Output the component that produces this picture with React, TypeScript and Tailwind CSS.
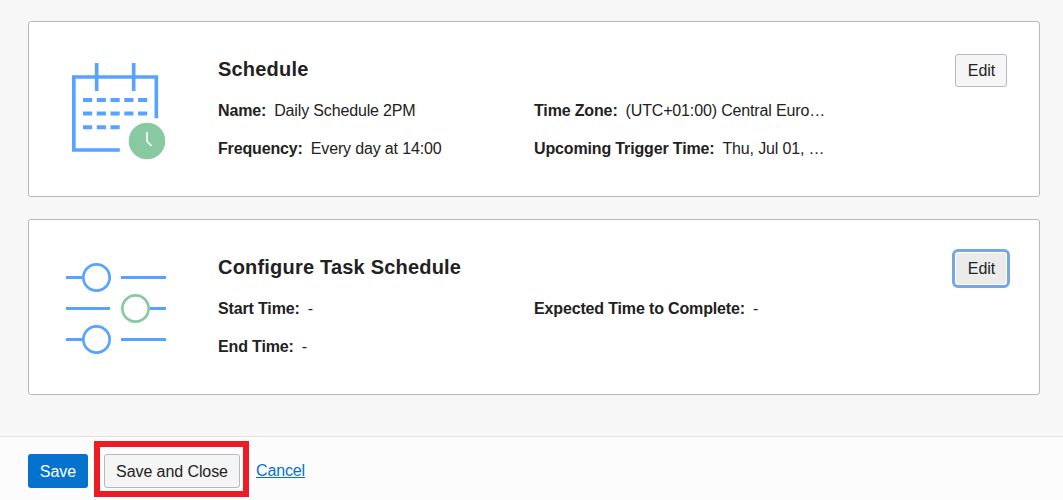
import type { ReactNode } from 'react';

function CalendarIcon() {
  return (
    <svg className="mt-7 h-[120px] w-[130px] shrink-0" viewBox="0 0 390 360" fill="none">
      <g stroke="#57a3ff" strokeWidth="11">
        <path d="M304 205V81H56.500V300H194.500" />
        <path d="M125 39V123M236 39V123" />
        <path d="M84 150H277M84 190.500H277M84 231.500H195" strokeDasharray="27.500 13.800" strokeWidth="12" />
      </g>
      <circle cx="276" cy="273" r="55" fill="#88c9a1" />
      <path d="M276 246V274L289.500 287.500" stroke="#fff" strokeWidth="5" />
    </svg>
  );
}

function SlidersIcon() {
  return (
    <svg className="mt-[30px] h-[120px] w-[130px] shrink-0" viewBox="0 0 390 360" fill="none">
      <g stroke="#57a3ff" strokeWidth="9">
        <path d="M33 82.500H82M198 82.500H333M33 175.500H165M284 175.500H333M33 268.500H82M198 268.500H333" />
        <circle cx="124.500" cy="82.500" r="39.500" strokeWidth="8" />
        <circle cx="124.500" cy="268.500" r="39.500" strokeWidth="8" />
      </g>
      <circle cx="241.500" cy="175.500" r="39.500" stroke="#88c9a1" strokeWidth="8" />
    </svg>
  );
}

function Field({ label, value }: { label: string; value: string }) {
  return (
    <div className="whitespace-nowrap leading-6 tracking-[-0.15px]">
      <span className="mr-2 font-bold">{label}:</span>
      <span>{value}</span>
    </div>
  );
}

interface CardProps {
  icon: ReactNode;
  title: string;
  fields: [string, string][];
  focused?: boolean;
}

function Card({ icon, title, fields, focused }: CardProps) {
  return (
    <section className="flex h-44 rounded-[3px] border border-[#b5b9c2] bg-white pl-[26px] pr-8">
      {icon}
      <div className="ml-[33px] min-w-0 flex-1 pt-[33px]">
        <h2 className="text-xl font-bold leading-7 tracking-[0.2px]">{title}</h2>
        <div className="mt-4 grid grid-cols-[292px_292px] gap-x-6 gap-y-3.5">
          {fields.map(([label, value]) => (
            <Field key={label} label={label} value={value} />
          ))}
        </div>
      </div>
      <button
        className={
          focused
            ? 'mt-8 h-[33px] w-[52px] rounded-[3px] border border-white bg-[#ebebeb] bg-clip-padding pl-px pt-px outline-3 outline-[#75a7e3]'
            : 'mt-8 h-[33px] w-[52px] rounded-[3px] border border-[#b5b9c2] bg-[#f5f5f5] pl-px pt-px'
        }
      >
        Edit
      </button>
    </section>
  );
}

export default function App() {
  return (
    <div className="flex h-[500px] w-[1063px] flex-col overflow-hidden bg-[#f7f7f7] font-['Liberation_Sans',Arial,sans-serif] text-base text-[#222]">
      <main className="flex flex-1 flex-col gap-[22px] pl-7 pr-[23px] pt-[21px]">
        <Card
          icon={<CalendarIcon />}
          title="Schedule"
          fields={[
            ['Name', 'Daily Schedule 2PM'],
            ['Time Zone', '(UTC+01:00) Central Euro…'],
            ['Frequency', 'Every day at 14:00'],
            ['Upcoming Trigger Time', 'Thu, Jul 01, …'],
          ]}
        />
        <Card
          focused
          icon={<SlidersIcon />}
          title="Configure Task Schedule"
          fields={[
            ['Start Time', '-'],
            ['Expected Time to Complete', '-'],
            ['End Time', '-'],
          ]}
        />
      </main>
      <footer className="flex h-16 items-start border-t border-[#e2e2e2] bg-[#fcfcfc] pl-7">
        <button className="mt-[17px] h-[34px] w-[60px] rounded-[3px] bg-[#0572ce] pt-px text-white">Save</button>
        <div className="ml-1.5 mt-1 flex h-14 w-[155px] items-start justify-center border-6 border-[#ed1c24] pt-[7px]">
          <button className="h-[34px] w-[136px] rounded-[3px] border border-[#b5b9c2] bg-[#f5f5f5] pl-px pt-px tracking-[-0.08px]">
            Save and Close
          </button>
        </div>
        <a className="ml-[7px] mt-[22px] leading-6 tracking-[-0.15px] text-[#0572ce] underline" href="#">Cancel</a>
      </footer>
    </div>
  );
}
